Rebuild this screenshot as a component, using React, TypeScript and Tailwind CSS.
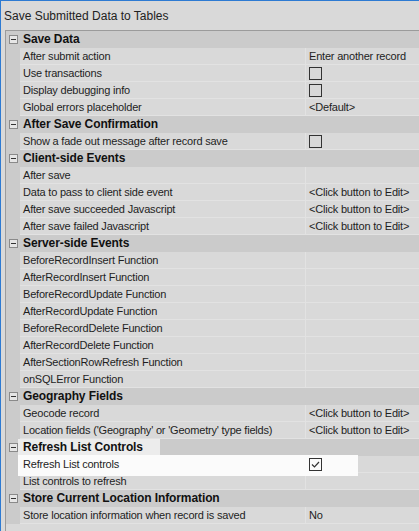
import React from "react";

type Row =
  | { kind: "cat"; label: string; hl?: boolean }
  | { kind: "prop"; label: string; value?: string; check?: boolean; checked?: boolean; hl?: boolean };

const rows: Row[] = [
  { kind: "cat", label: "Save Data" },
  { kind: "prop", label: "After submit action", value: "Enter another record" },
  { kind: "prop", label: "Use transactions", check: true },
  { kind: "prop", label: "Display debugging info", check: true },
  { kind: "prop", label: "Global errors placeholder", value: "<Default>" },
  { kind: "cat", label: "After Save Confirmation" },
  { kind: "prop", label: "Show a fade out message after record save", check: true },
  { kind: "cat", label: "Client-side Events" },
  { kind: "prop", label: "After save" },
  { kind: "prop", label: "Data to pass to client side event", value: "<Click button to Edit>" },
  { kind: "prop", label: "After save succeeded Javascript", value: "<Click button to Edit>" },
  { kind: "prop", label: "After save failed Javascript", value: "<Click button to Edit>" },
  { kind: "cat", label: "Server-side Events" },
  { kind: "prop", label: "BeforeRecordInsert Function" },
  { kind: "prop", label: "AfterRecordInsert Function" },
  { kind: "prop", label: "BeforeRecordUpdate Function" },
  { kind: "prop", label: "AfterRecordUpdate Function" },
  { kind: "prop", label: "BeforeRecordDelete Function" },
  { kind: "prop", label: "AfterRecordDelete Function" },
  { kind: "prop", label: "AfterSectionRowRefresh Function" },
  { kind: "prop", label: "onSQLError Function" },
  { kind: "cat", label: "Geography Fields" },
  { kind: "prop", label: "Geocode record", value: "<Click button to Edit>" },
  { kind: "prop", label: "Location fields ('Geography' or 'Geometry' type fields)", value: "<Click button to Edit>" },
  { kind: "cat", label: "Refresh List Controls", hl: true },
  { kind: "prop", label: "Refresh List controls", check: true, checked: true, hl: true },
  { kind: "prop", label: "List controls to refresh" },
  { kind: "cat", label: "Store Current Location Information" },
  { kind: "prop", label: "Store location information when record is saved", value: "No" },
];

function MinusBox() {
  return (
    <div className="w-[9px] h-[9px] border border-[#8a8a8a] bg-[#e6e6e6] flex items-center justify-center">
      <div className="w-[5px] h-px bg-[#333]" />
    </div>
  );
}

function CheckBox({ checked }: { checked?: boolean }) {
  return (
    <div className="relative z-10 w-[13px] h-[13px] border border-[#333] flex items-center justify-center">
      {checked && (
        <svg width="11" height="11" viewBox="0 0 11 11">
          <polyline points="2,5.5 4.5,8 9,3" fill="none" stroke="#333" strokeWidth="1.2" />
        </svg>
      )}
    </div>
  );
}

export default function App() {
  return (
    <div
      className="w-[419px] h-[531px] bg-[#d9d9d9] border-t border-l border-[#2d7ad2] overflow-hidden flex flex-col text-[#1e1e1e]"
      style={{ fontFamily: '"Liberation Sans", Arial, sans-serif' }}
    >
      <div className="h-[29px] pl-[3px] flex items-center text-[12px] text-[#222]">
        Save Submitted Data to Tables
      </div>
      <div className="ml-[4px] flex-1 border-l border-t border-[#9b9b9b] bg-[#d9d9d9] flex flex-col">
        {rows.map((r, i) =>
          r.kind === "cat" ? (
            <div key={i} className="relative h-[17px] flex bg-[#cbcbcb] border-b border-[#cbcbcb]">
              {r.hl && <div className="absolute z-[5] left-[12px] top-0 w-[142px] h-[18px] bg-[#ececec]" />}
              <div className="relative z-10 w-[14px] flex items-center justify-center">
                <MinusBox />
              </div>
              <div className="relative z-10 pl-[3px] flex items-center text-[12px] font-bold tracking-[-0.1px] text-[#111]">
                {r.label}
              </div>
            </div>
          ) : (
            <div key={i} className="relative h-[17px] flex">
              {r.hl && <div className="absolute z-[5] left-[12px] -top-[1px] w-[340px] h-[21px] bg-[#fbfbfb]" />}
              <div className="w-[14px] bg-[#cbcbcb]" />
              <div className="w-[286px] bg-[#d9d9d9] border-b border-[#e2e2e2] border-r flex items-center pl-[3px] overflow-hidden whitespace-nowrap">
                <span className="relative z-10 text-[11px] tracking-[-0.2px]">{r.label}</span>
              </div>
              <div className="flex-1 bg-[#d9d9d9] border-b border-[#e2e2e2] flex items-center pl-[3px] overflow-hidden whitespace-nowrap">
                {r.check ? (
                  <CheckBox checked={r.checked} />
                ) : (
                  r.value && <span className="relative z-10 text-[11px] tracking-[-0.2px]">{r.value}</span>
                )}
              </div>
            </div>
          )
        )}
      </div>
    </div>
  );
}
